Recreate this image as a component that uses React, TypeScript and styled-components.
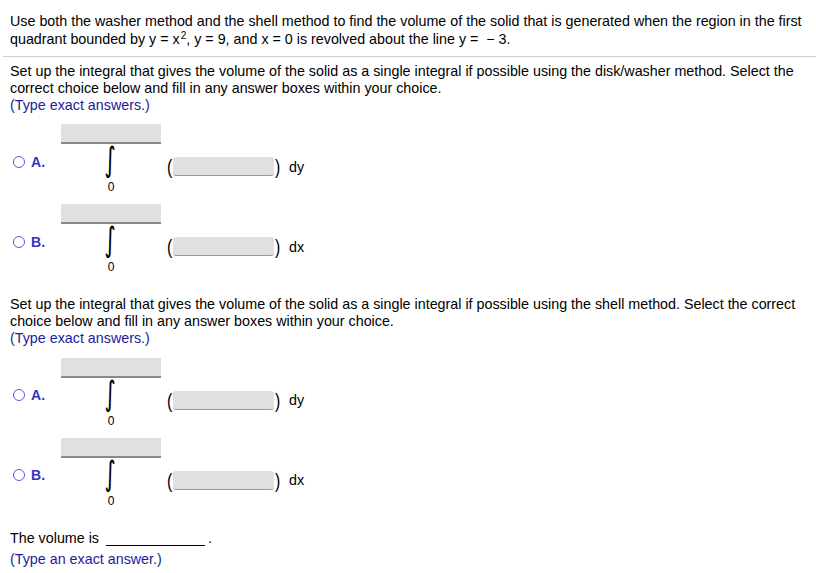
import React from "react";
import styled, { createGlobalStyle } from "styled-components";

const Global = createGlobalStyle`
  html, body { margin: 0; padding: 0; background: #fff; }
  body { font-family: "Liberation Sans", Arial, sans-serif; font-size: 14.3px; color: #000; }
`;

const Page = styled.div`
  width: 816px;
  box-sizing: border-box;
`;

const Header = styled.p`
  margin: 0;
  padding: 12px 10px 0 10px;
  line-height: 18px;
`;

const Sup = styled.sup`
  font-size: 10px;
  line-height: 0;
  vertical-align: 5px;
  margin-left: 1px;
`;

const Divider = styled.hr`
  margin: 8px 0 0 3px;
  border: none;
  border-top: 1px solid #cfcfcf;
  height: 0;
`;

const Section = styled.section<{ $top: number }>`
  padding: ${(p) => p.$top}px 10px 0 10px;
`;

const Para = styled.p`
  margin: 0;
  line-height: 16.8px;
`;

const Hint = styled.span`
  color: #1c1c9a;
`;

const Choices = styled.div`
  margin-top: 11px;
  display: flex;
  flex-direction: column;
  gap: 10px;
`;

const Choice = styled.div`
  display: grid;
  grid-template-columns: 51px 100px auto;
  grid-template-rows: 20px 36px 14px;
`;

const Label = styled.label`
  grid-column: 1;
  grid-row: 2;
  align-self: center;
  display: flex;
  align-items: center;
  gap: 6px;
  margin-top: -1px;
  color: #3434c6;
  font-weight: bold;
  font-size: 14px;
`;

const Radio = styled.span`
  width: 10px;
  height: 10px;
  border-radius: 50%;
  border: 1.7px solid #4f5cdc;
  margin-left: 3px;
`;

const Upper = styled.div`
  grid-column: 2;
  grid-row: 1;
  background: #e0e0e0;
  border-bottom: 2px solid #8a8a8a;
  box-sizing: border-box;
`;

const Sign = styled.div`
  grid-column: 2;
  grid-row: 2;
  display: flex;
  justify-content: center;
  align-items: center;
`;

const SignGlyph = styled.span`
  display: block;
  font-family: "DejaVu Sans", sans-serif;
  font-size: 27px;
  line-height: 36px;
  transform: translateY(-2px) scale(0.8, 1.25);
  margin-left: -1px;
`;

const Lower = styled.div`
  grid-column: 2;
  grid-row: 3;
  text-align: center;
  font-size: 12px;
  line-height: 14px;
`;

const Integrand = styled.div`
  grid-column: 3;
  grid-row: 2;
  align-self: center;
  display: flex;
  align-items: center;
  margin: 9px 0 0 5px;
`;

const Paren = styled.span`
  font-size: 21px;
  line-height: 1;
  transform: scaleX(0.75);
`;

const Box = styled.span`
  width: 101px;
  height: 19px;
  background: #e0e0e0;
  border-radius: 3px;
  border-bottom: 1.5px solid #9a9a9a;
  box-sizing: border-box;
`;

const Diff = styled.span`
  margin-left: 8px;
`;

const Volume = styled.div`
  margin-top: 22px;
  padding: 0 10px;
  line-height: 17px;
`;

const Blank = styled.span`
  display: inline-block;
  width: 99px;
  margin: 0 3px 0 7px;
  border-bottom: 1px solid #000;
  vertical-align: -3px;
  height: 14px;
`;

const VolumeHint = styled.div`
  color: #1c1c9a;
  margin-top: 4px;
`;

const ChoiceRow = ({ letter, d }: { letter: string; d: string }) => (
  <Choice>
    <Label>
      <Radio />
      {letter}.
    </Label>
    <Upper />
    <Sign>
      <SignGlyph>∫</SignGlyph>
    </Sign>
    <Lower>0</Lower>
    <Integrand>
      <Paren>(</Paren>
      <Box />
      <Paren>)</Paren>
      <Diff>{d}</Diff>
    </Integrand>
  </Choice>
);

export default function App() {
  return (
    <Page>
      <Global />
      <Header>
        Use both the washer method and the shell method to find the volume of the solid that is
        generated when the region in the first quadrant bounded by y = x<Sup>2</Sup>, y = 9, and
        x = 0 is revolved about the line y = &nbsp;− 3.
      </Header>
      <Divider />
      <Section $top={6}>
        <Para>
          Set up the integral that gives the volume of the solid as a single integral if possible
          using the disk/washer method. Select the correct choice below and fill in any answer
          boxes within your choice.
          <br />
          <Hint>(Type exact answers.)</Hint>
        </Para>
        <Choices>
          <ChoiceRow letter="A" d="dy" />
          <ChoiceRow letter="B" d="dx" />
        </Choices>
      </Section>
      <Section $top={22}>
        <Para>
          Set up the integral that gives the volume of the solid as a single integral if possible
          using the shell method. Select the correct choice below and fill in any answer boxes
          within your choice.
          <br />
          <Hint>(Type exact answers.)</Hint>
        </Para>
        <Choices>
          <ChoiceRow letter="A" d="dy" />
          <ChoiceRow letter="B" d="dx" />
        </Choices>
      </Section>
      <Volume>
        The volume is
        <Blank />.
        <VolumeHint>(Type an exact answer.)</VolumeHint>
      </Volume>
    </Page>
  );
}
